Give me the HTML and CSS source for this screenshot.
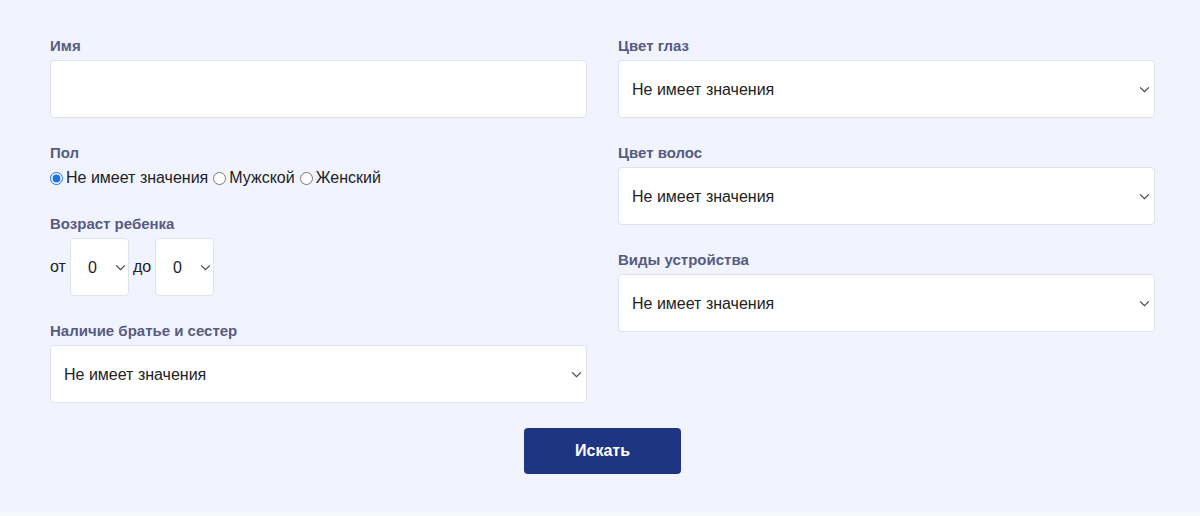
FILE: index.html
```html
<!DOCTYPE html>
<html lang="ru">
<head>
<meta charset="utf-8">
<link rel="stylesheet" href="styles.css">
</head>
<body>
<form class="form">
  <div class="cols">
    <div class="col">
      <div class="group">
        <label class="label">Имя</label>
        <input class="field" type="text">
      </div>
      <div class="group">
        <label class="label">Пол</label>
        <div class="radios">
          <label class="radio"><input type="radio" name="sex" checked> Не имеет значения</label>
          <label class="radio"><input type="radio" name="sex"> Мужской</label>
          <label class="radio"><input type="radio" name="sex"> Женский</label>
        </div>
      </div>
      <div class="group">
        <label class="label">Возраст ребенка</label>
        <div class="ages">
          <span>от</span>
          <span class="sel small"><select><option>0</option></select><svg class="chev" viewBox="0 0 12 8"><path d="M1 1.5l5 5 5-5" fill="none" stroke="#444" stroke-width="1.3"/></svg></span>
          <span>до</span>
          <span class="sel small"><select><option>0</option></select><svg class="chev" viewBox="0 0 12 8"><path d="M1 1.5l5 5 5-5" fill="none" stroke="#444" stroke-width="1.3"/></svg></span>
        </div>
      </div>
      <div class="group">
        <label class="label">Наличие братье и сестер</label>
        <span class="sel"><select><option>Не имеет значения</option></select><svg class="chev" viewBox="0 0 12 8"><path d="M1 1.5l5 5 5-5" fill="none" stroke="#444" stroke-width="1.3"/></svg></span>
      </div>
    </div>
    <div class="col">
      <div class="group">
        <label class="label">Цвет глаз</label>
        <span class="sel"><select><option>Не имеет значения</option></select><svg class="chev" viewBox="0 0 12 8"><path d="M1 1.5l5 5 5-5" fill="none" stroke="#444" stroke-width="1.3"/></svg></span>
      </div>
      <div class="group">
        <label class="label">Цвет волос</label>
        <span class="sel"><select><option>Не имеет значения</option></select><svg class="chev" viewBox="0 0 12 8"><path d="M1 1.5l5 5 5-5" fill="none" stroke="#444" stroke-width="1.3"/></svg></span>
      </div>
      <div class="group">
        <label class="label">Виды устройства</label>
        <span class="sel"><select><option>Не имеет значения</option></select><svg class="chev" viewBox="0 0 12 8"><path d="M1 1.5l5 5 5-5" fill="none" stroke="#444" stroke-width="1.3"/></svg></span>
      </div>
    </div>
  </div>
  <div class="actions">
    <button class="btn" type="button">Искать</button>
  </div>
</form>
</body>
</html>
```
FILE: styles.css
```css
html, body {
  margin: 0;
  padding: 0;
}
body {
  background: #f1f4fe;
  font-family: "Liberation Sans", Arial, sans-serif;
  font-size: 15px;
  color: #222;
  height: 516px;
  overflow: hidden;
  box-shadow: inset 0 -4px 0 #f7f8fc;
}
.form {
  padding: 36px 45px 0 50px;
}
.cols {
  display: grid;
  grid-template-columns: 1fr 1fr;
  column-gap: 31px;
}
.col {
  display: flex;
  flex-direction: column;
}
.group {
  display: flex;
  flex-direction: column;
  margin-bottom: 25px;
}
.label {
  font-weight: bold;
  font-size: 15px;
  line-height: 20px;
  color: #585b82;
  margin-bottom: 4px;
}
.field {
  height: 58px;
  box-sizing: border-box;
  border: 1px solid #e1e3ea;
  border-radius: 4px;
  background: #fff;
  font: inherit;
  padding: 0 14px;
  outline: none;
}
.radios {
  display: flex;
  align-items: center;
  line-height: 20px;
  font-size: 16px;
  color: #222;
  margin-top: 1px;
  margin-bottom: 1px;
}
.radio {
  display: flex;
  align-items: center;
  margin-right: 5px;
}
.radio input {
  margin: 0 3px 0 0;
  width: 13px;
  height: 13px;
  accent-color: #1a73e8;
}
.ages {
  display: flex;
  align-items: center;
  gap: 4px;
  font-size: 16px;
}
.sel {
  position: relative;
  display: block;
}
.sel select {
  appearance: none;
  -webkit-appearance: none;
  width: 100%;
  height: 58px;
  box-sizing: border-box;
  border: 1px solid #e1e3ea;
  border-radius: 4px;
  background: #fff;
  font-family: inherit;
  font-size: 16px;
  color: #222;
  padding: 0 30px 0 13px;
  outline: none;
}
.chev {
  position: absolute;
  right: 5px;
  top: 26px;
  width: 11px;
  height: 7px;
  pointer-events: none;
}
.sel.small {
  width: 59px;
}
.sel.small select {
  padding-left: 17px;
  font-size: 16px;
}
.sel.small .chev {
  right: 3px;
}
.actions {
  display: flex;
  justify-content: center;
}
.btn {
  width: 157px;
  height: 46px;
  background: #1e3582;
  color: #fff;
  border: none;
  border-radius: 4px;
  font-family: inherit;
  font-weight: bold;
  font-size: 16px;
  cursor: pointer;
}
```
